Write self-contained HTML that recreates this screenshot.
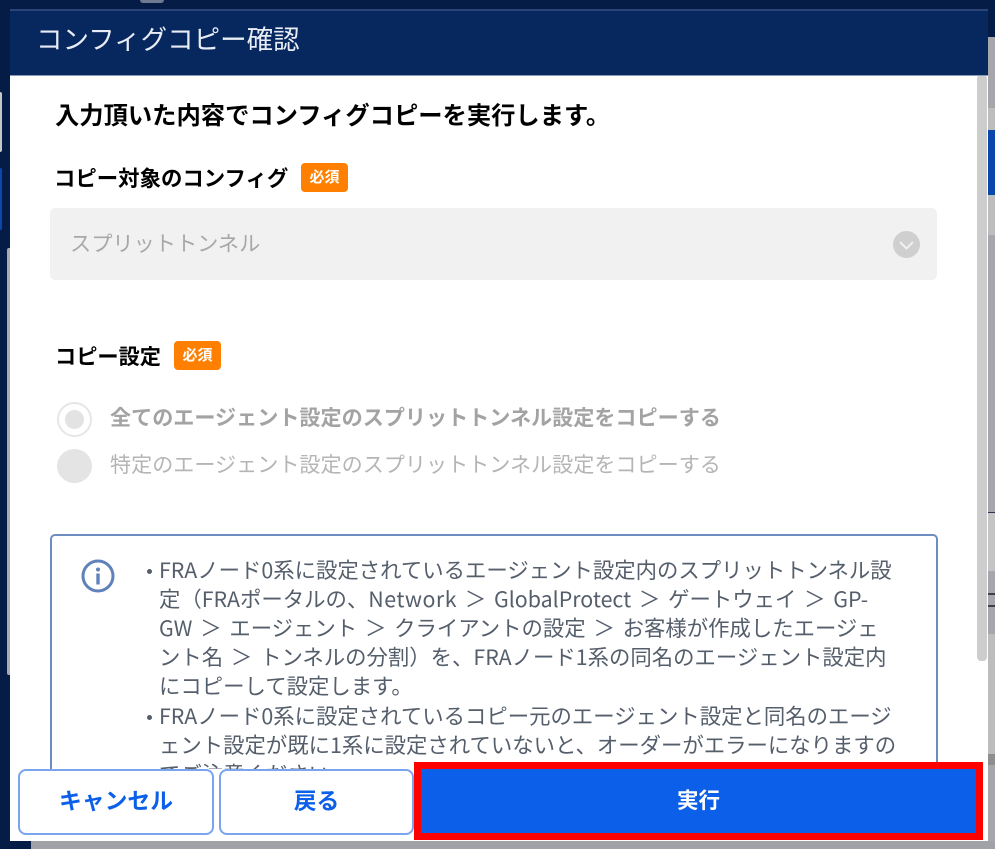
<!DOCTYPE html>
<html lang="ja">
<head>
<meta charset="utf-8">
<style>
html,body{margin:0;padding:0;width:995px;height:849px;overflow:hidden;background:#051d46}
body{position:relative;font-family:"Liberation Sans","Noto Sans CJK JP",sans-serif}
.a{position:absolute}
.t{position:absolute;white-space:nowrap;line-height:30px}
.l{position:absolute;left:159px;white-space:nowrap;font-family:"Noto Sans CJK JP",sans-serif;font-size:21.38px;word-spacing:3px;line-height:29px;color:#555e6b;height:29px}
.badge{position:absolute;width:47px;height:29px;background:#ff8000;border-radius:4px;color:#fff;font-weight:700;font-size:15px;line-height:29px;text-align:center}
.btn{position:absolute;box-sizing:border-box;top:769px;height:66px;background:#fff;border:2px solid #78a4f0;border-radius:8px;color:#0b5fe8;font-weight:700;font-size:22.8px;line-height:60px;text-align:center}
</style>
</head>
<body>
<!-- backdrop strips -->
<div class="a" style="left:0;top:92px;width:2px;height:60px;background:#c8c8c8;border-radius:0 2px 2px 0"></div>
<div class="a" style="left:0;top:168px;width:2px;height:62px;background:#0b46ad;border-radius:0 2px 2px 0"></div>
<div class="a" style="left:7px;top:248px;width:3px;height:427px;background:#a9abae;border-radius:2px 0 0 2px"></div>
<div class="a" style="left:140px;top:0;width:24px;height:3px;background:#6d7a92;border-radius:0 0 12px 12px"></div>

<div class="a" style="left:988px;top:37px;width:7px;height:812px;background:#a5a7ad"></div>
<div class="a" style="left:988px;top:108px;width:7px;height:22px;background:#bdbdbd"></div>
<div class="a" style="left:988px;top:130px;width:7px;height:65px;background:#0b46ad"></div>
<div class="a" style="left:988px;top:195px;width:7px;height:40px;background:#bdbdbd"></div>
<div class="a" style="left:988px;top:512px;width:7px;height:1px;background:#2a3550"></div>
<div class="a" style="left:988px;top:513px;width:7px;height:58px;background:#c4c4c4"></div>
<div class="a" style="left:988px;top:593px;width:7px;height:2px;background:#3a3f4a"></div>
<div class="a" style="left:988px;top:605px;width:7px;height:2px;background:#3a3f4a"></div>
<div class="a" style="left:988px;top:634px;width:7px;height:120px;background:#bdbdbd"></div>
<div class="a" style="left:988px;top:754px;width:7px;height:11px;background:#8e8e8e"></div>
<div class="a" style="left:972px;top:823px;width:16px;height:18px;background:#0a2a66"></div>
<div class="a" style="left:0;top:841px;width:995px;height:8px;background:#a0a2a7"></div>
<div class="a" style="left:0;top:841px;width:31px;height:8px;background:#051d46"></div>

<!-- modal -->
<div class="a" style="left:10px;top:75px;width:978px;height:766px;background:#fff;overflow:hidden">
  <div class="a" style="left:967px;top:0;width:10px;height:586px;background:#cdcdcd;border-radius:4px"></div>
</div>
<div class="a" style="left:10px;top:9px;width:978px;height:66px;background:#07275f;border-top:2px solid #2a4477;box-sizing:border-box"></div>
<div class="a" style="left:10px;top:75px;width:978px;height:1px;background:#8a9ab8"></div>
<div class="t" style="left:36px;top:25px;font-size:26.5px;color:#e8edf5">コンフィグコピー確認</div>

<div class="t" style="left:55px;top:102px;font-size:24.3px;font-weight:700;color:#000">入力頂いた内容でコンフィグコピーを実行します。</div>

<div class="t" style="left:54px;top:164px;font-size:21.4px;font-weight:700;color:#000">コピー対象のコンフィグ</div>
<div class="badge" style="left:301px;top:163px">必須</div>

<div class="a" style="left:50px;top:208px;width:887px;height:72px;background:#f1f1f1;border-radius:5px"></div>
<div class="t" style="left:70px;top:230px;font-size:21.2px;color:#a8a8a8">スプリットトンネル</div>
<svg class="a" style="left:893px;top:231px" width="27" height="27" viewBox="0 0 27 27"><circle cx="13.5" cy="13.5" r="13.5" fill="#cfcfcf"/><path d="M7 11l6.500 6.500L20 11" fill="none" stroke="#f1f1f1" stroke-width="2"/></svg>

<div class="t" style="left:55px;top:343px;font-size:21.2px;font-weight:700;color:#000">コピー設定</div>
<div class="badge" style="left:174px;top:341px">必須</div>

<div class="a" style="left:57px;top:402px;box-sizing:border-box;width:35px;height:35px;border:2px solid #e6e6e6;border-radius:50%;background:#fff"></div>
<div class="a" style="left:65px;top:410px;width:19px;height:19px;border-radius:50%;background:#e3e3e3"></div>
<div class="t" style="left:110px;top:404px;font-size:21.1px;font-weight:700;color:#a3a3a3">全てのエージェント設定のスプリットトンネル設定をコピーする</div>
<div class="a" style="left:57px;top:449px;width:35px;height:34px;border-radius:50%;background:#e4e4e4"></div>
<div class="t" style="left:110px;top:451px;font-size:21.1px;color:#b5b5b5">特定のエージェント設定のスプリットトンネル設定をコピーする</div>

<!-- info box -->
<div class="a" style="left:50px;top:534px;box-sizing:border-box;width:888px;height:290px;border:2px solid #6d8cc0;border-radius:5px;background:#fff"></div>
<svg class="a" style="left:81px;top:559px" width="34" height="34" viewBox="0 0 34 34"><circle cx="17" cy="17" r="15" fill="none" stroke="#5f82ba" stroke-width="3"/><circle cx="17" cy="10.500" r="2" fill="#5f82ba"/><rect x="15.300" y="14.500" width="3.400" height="11" fill="#5f82ba"/></svg>
<div class="a" style="left:147px;top:569px;width:5px;height:5px;border-radius:50%;background:#555e6b"></div>
<div class="l" style="top:555px">FRAノード0系に設定されているエージェント設定内のスプリットトンネル設</div>
<div class="l" style="top:584px">定（FRAポータルの、<span style="letter-spacing:.5px">Network</span> ＞ GlobalProtect ＞ ゲートウェイ ＞ GP-</div>
<div class="l" style="top:613px">GW ＞ エージェント ＞ クライアントの設定 ＞ お客様が作成したエージェ</div>
<div class="l" style="top:642px">ント名 ＞ トンネルの分割）を、FRAノード1系の同名のエージェント設定内</div>
<div class="l" style="top:671px">にコピーして設定します。</div>
<div class="a" style="left:147px;top:715px;width:5px;height:5px;border-radius:50%;background:#555e6b"></div>
<div class="l" style="top:701px">FRAノード0系に設定されているコピー元のエージェント設定と同名のエージ</div>
<div class="l" style="top:730px">ェント設定が既に1系に設定されていないと、オーダーがエラーになりますの</div>
<div class="l" style="top:759px">でご注意ください。</div>

<!-- footer -->
<div class="a" style="left:11px;top:769px;width:966px;height:72px;background:#fff"></div>
<div class="btn" style="left:18px;width:196px">キャンセル</div>
<div class="btn" style="left:219px;width:195px">戻る</div>
<div class="a" style="left:414px;top:762px;width:569px;height:78px;box-sizing:border-box;border:7px solid #fe0000;background:#0b5fe8"></div>
<div class="t" style="left:420px;top:786px;width:557px;text-align:center;font-size:21.5px;font-weight:700;color:#fff">実行</div>
</body>
</html>
